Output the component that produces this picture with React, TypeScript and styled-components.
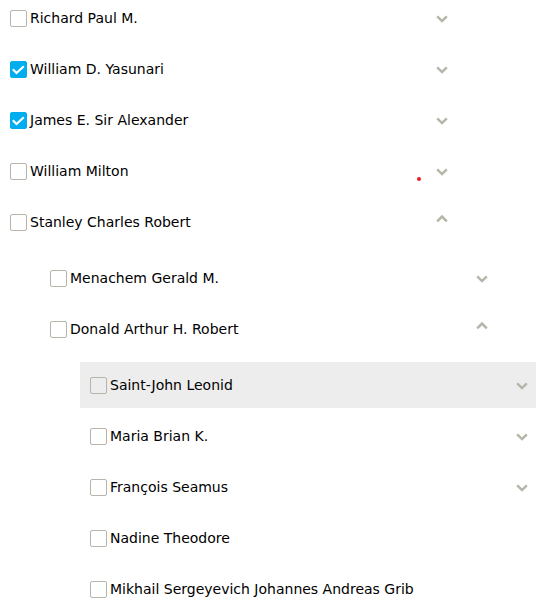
import React, { useState } from "react";
import styled, { createGlobalStyle } from "styled-components";

const GlobalStyle = createGlobalStyle`
  * {
    box-sizing: border-box;
  }
  body {
    margin: 0;
    background: #fff;
    color: #000;
    font-family: "DejaVu Sans", sans-serif;
    font-size: 14px;
    line-height: 17px;
  }
`;

const Page = styled.main`
  height: 100vh;
  overflow: auto;
  scrollbar-width: none;
  padding-right: 97px;
`;

const Tree = styled.ul`
  list-style: none;
  margin: -5px 0 0;
  padding: 0;
  display: flex;
  flex-direction: column;
  gap: 5px;
`;

/* Each level keeps the row width and shifts right as a whole. */
const SubTree = styled(Tree)`
  margin: 10px -40px 0 40px;
`;

const Row = styled.div<{ $active?: boolean }>`
  position: relative;
  display: flex;
  align-items: center;
  justify-content: space-between;
  height: 46px;
  padding: 1px 8px 0 10px;
  background: ${({ $active }) => ($active ? "#ededed" : "transparent")};
`;

const Label = styled.label`
  display: flex;
  align-items: center;
  gap: 3px;
  white-space: nowrap;
`;

const BoxFrame = styled.span`
  display: grid;
  width: 17px;
  height: 17px;

  > * {
    grid-area: 1 / 1;
  }
`;

const BoxInput = styled.input`
  appearance: none;
  width: 17px;
  height: 17px;
  margin: 0;
  border: 1px solid #b5b5a9;
  border-radius: 2px;

  &:checked {
    border-color: #00adef;
    background: #00adef;
  }
`;

const Tick = styled.svg`
  pointer-events: none;
`;

const Toggle = styled.button`
  display: block;
  width: 12px;
  height: 17px;
  padding: 0;
  border: 0;
  background: none;
  color: #b5b5a9;
`;

const Chevron = styled.svg`
  display: block;
`;

const Dot = styled.span`
  position: absolute;
  right: 35px;
  top: 29px;
  width: 4px;
  height: 4px;
  border-radius: 50%;
  background: #ed1c24;
`;

type Person = {
  name: string;
  checked?: boolean;
  active?: boolean;
  marked?: boolean;
  open?: boolean;
  leaf?: boolean;
  children?: Person[];
};

const people: Person[] = [
  { name: "Richard Paul M." },
  { name: "William D. Yasunari", checked: true },
  { name: "James E. Sir Alexander", checked: true },
  { name: "William Milton", marked: true },
  {
    name: "Stanley Charles Robert",
    open: true,
    children: [
      { name: "Menachem Gerald M." },
      {
        name: "Donald Arthur H. Robert",
        open: true,
        children: [
          { name: "Saint-John Leonid", active: true },
          { name: "Maria Brian K." },
          { name: "François Seamus" },
          { name: "Nadine Theodore", leaf: true },
          { name: "Mikhail Sergeyevich Johannes Andreas Grib", leaf: true },
        ],
      },
    ],
  },
];

function TreeItem({ person }: { person: Person }) {
  const [checked, setChecked] = useState(Boolean(person.checked));
  const [open, setOpen] = useState(Boolean(person.open));

  return (
    <li>
      <Row $active={person.active}>
        <Label>
          <BoxFrame>
            <BoxInput
              type="checkbox"
              checked={checked}
              onChange={(e) => setChecked(e.target.checked)}
            />
            {checked && (
              <Tick width="17" height="17" viewBox="0 0 17 17" fill="none" aria-hidden="true">
                <path d="M2.8 8.3 L6.5 12 L13.8 5.2" stroke="#fff" strokeWidth="2.2" />
              </Tick>
            )}
          </BoxFrame>
          {person.name}
        </Label>
        {person.marked && <Dot />}
        {!person.leaf && (
          <Toggle
            type="button"
            aria-expanded={open}
            aria-label={person.name}
            onClick={() => setOpen(!open)}
          >
            <Chevron width="12" height="17" viewBox="0 0 12 17" fill="none" aria-hidden="true">
              <path
                d={open ? "M1.2 7.4 L6 2.6 L10.8 7.4" : "M1.2 6.3 L6 11.1 L10.8 6.3"}
                stroke="currentColor"
                strokeWidth="2.5"
              />
            </Chevron>
          </Toggle>
        )}
      </Row>
      {open && person.children && (
        <SubTree>
          {person.children.map((child) => (
            <TreeItem key={child.name} person={child} />
          ))}
        </SubTree>
      )}
    </li>
  );
}

export default function App() {
  return (
    <Page>
      <GlobalStyle />
      <Tree>
        {people.map((person) => (
          <TreeItem key={person.name} person={person} />
        ))}
      </Tree>
    </Page>
  );
}
